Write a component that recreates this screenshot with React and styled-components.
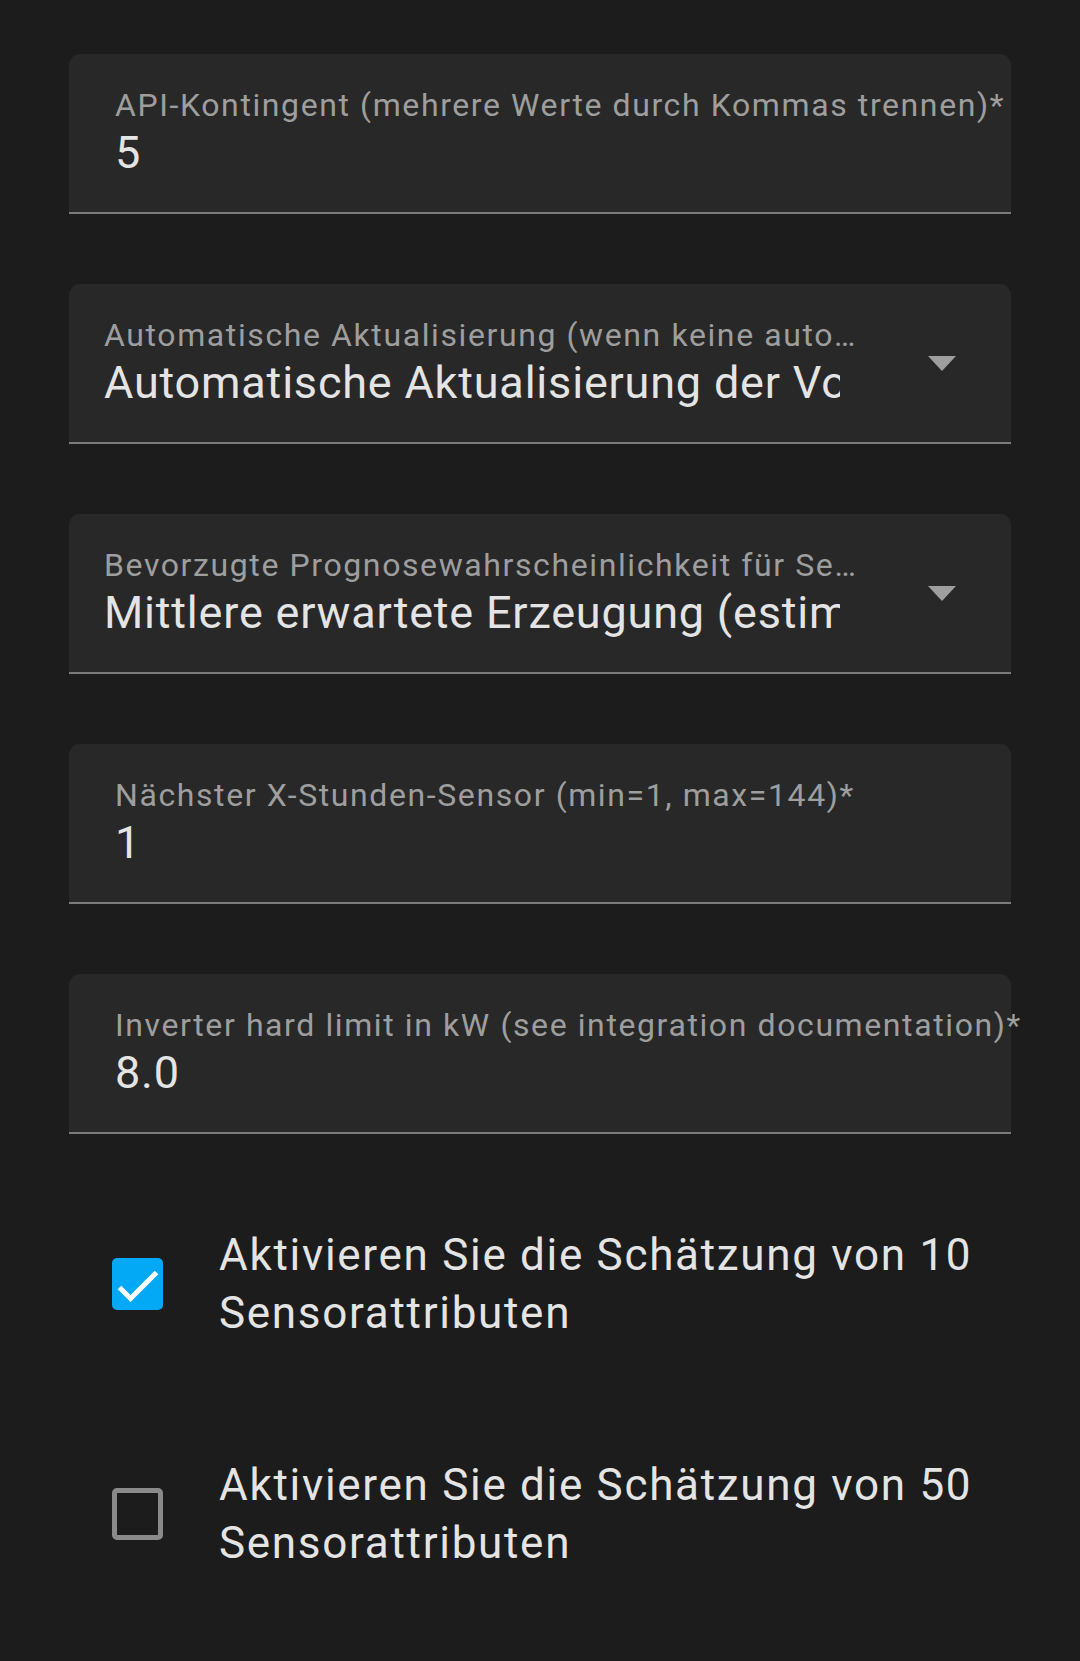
import React from "react";
import styled, { createGlobalStyle } from "styled-components";

const GlobalStyle = createGlobalStyle`
  html, body {
    margin: 0;
    padding: 0;
    background: #1c1c1c;
    font-family: Roboto, "Noto Sans", "Liberation Sans", sans-serif;
  }
  body { min-height: 1661px; }
`;

const Page = styled.div`
  display: flex;
  flex-direction: column;
  gap: 70px;
  padding: 54px 69px 60px 69px;
  width: 1080px;
  box-sizing: border-box;
`;

const Field = styled.div`
  height: 160px;
  box-sizing: border-box;
  background: #282828;
  border-radius: 11px 11px 0 0;
  border-bottom: 2px solid #7b7b7b;
  display: flex;
  align-items: center;
  padding-left: ${(p) => (p.$select ? "35px" : "46px")};
  padding-right: ${(p) => (p.$select ? "55px" : "0")};
`;

const FieldBody = styled.div`
  flex: 1;
  min-width: 0;
  align-self: stretch;
  padding-top: 31px;
  box-sizing: border-box;
`;

const Label = styled.div`
  font-size: 32px;
  line-height: 40px;
  letter-spacing: 1.6px;
  color: #9e9e9e;
  white-space: nowrap;
  ${(p) =>
    p.$select &&
    `
    width: 766px;
    overflow: hidden;
    text-overflow: ellipsis;
  `}
`;

const Value = styled.div`
  margin-top: 1px;
  font-size: 45px;
  line-height: 54px;
  letter-spacing: 0.8px;
  color: #e4e4e4;
  white-space: nowrap;
  overflow: hidden;
`;

const Arrow = styled.svg`
  flex: none;
  width: 28px;
  height: 15px;
  margin-left: 88px;
`;

const CheckRow = styled.div`
  height: 160px;
  display: flex;
  align-items: center;
  gap: 56px;
  padding-left: 43px;
`;

const Box = styled.div`
  flex: none;
  width: 51px;
  height: 52px;
  box-sizing: border-box;
  border-radius: 5px;
  background: ${(p) => (p.$checked ? "#03a9f4" : "transparent")};
  border: ${(p) => (p.$checked ? "none" : "5px solid #8a8a8a")};
  display: flex;
`;

const CheckText = styled.div`
  font-size: 44px;
  line-height: 58px;
  letter-spacing: 1.7px;
  color: #e4e4e4;
`;

function TextField({ label, value }) {
  return (
    <Field>
      <FieldBody>
        <Label>{label}</Label>
        <Value>{value}</Value>
      </FieldBody>
    </Field>
  );
}

function SelectField({ label, value }) {
  return (
    <Field $select>
      <FieldBody>
        <Label $select>{label}</Label>
        <Value>{value}</Value>
      </FieldBody>
      <Arrow viewBox="0 0 28 15">
        <polygon points="0,0 28,0 14,15" fill="#9e9e9e" />
      </Arrow>
    </Field>
  );
}

function Checkbox({ checked, children }) {
  return (
    <CheckRow>
      <Box $checked={checked}>
        {checked && (
          <svg width="51" height="52" viewBox="0 0 51 52">
            <path
              d="M7.5 29.5 L18.5 40.5 L44.5 14.5"
              fill="none"
              stroke="#ffffff"
              strokeWidth="5"
            />
          </svg>
        )}
      </Box>
      <CheckText>{children}</CheckText>
    </CheckRow>
  );
}

export default function App() {
  return (
    <>
      <GlobalStyle />
      <Page>
        <TextField
          label="API-Kontingent (mehrere Werte durch Kommas trennen)*"
          value="5"
        />
        <SelectField
          label="Automatische Aktualisierung (wenn keine automatische Aktualisierung erfolgt)"
          value="Automatische Aktualisierung der Vorhersagen"
        />
        <SelectField
          label="Bevorzugte Prognosewahrscheinlichkeit für Sensoren"
          value="Mittlere erwartete Erzeugung (estimate)"
        />
        <TextField
          label="Nächster X-Stunden-Sensor (min=1, max=144)*"
          value="1"
        />
        <TextField
          label="Inverter hard limit in kW (see integration documentation)*"
          value="8.0"
        />
        <Checkbox checked>
          Aktivieren Sie die Schätzung von 10 Sensorattributen
        </Checkbox>
        <Checkbox checked={false}>
          Aktivieren Sie die Schätzung von 50 Sensorattributen
        </Checkbox>
      </Page>
    </>
  );
}
